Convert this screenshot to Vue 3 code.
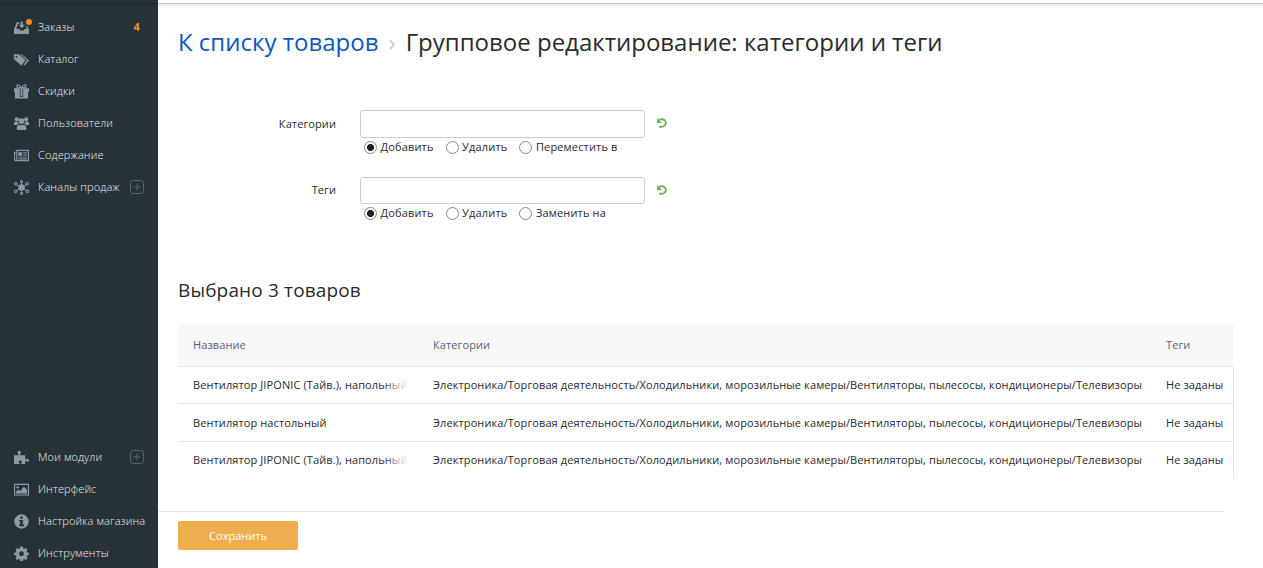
<script setup>
import { ref } from 'vue'

const mainNav = [
  { label: 'Заказы', icon: 'orders', count: 4 },
  { label: 'Каталог', icon: 'tags' },
  { label: 'Скидки', icon: 'gift' },
  { label: 'Пользователи', icon: 'users' },
  { label: 'Содержание', icon: 'news' },
  { label: 'Каналы продаж', icon: 'hub', plus: true },
]
const toolNav = [
  { label: 'Мои модули', icon: 'puzzle', plus: true },
  { label: 'Интерфейс', icon: 'image' },
  { label: 'Настройка магазина', icon: 'info' },
  { label: 'Инструменты', icon: 'gear' },
]
const navGroups = [mainNav, toolNav]

const fields = ref([
  { label: 'Категории', value: '', mode: 'Добавить', modes: ['Добавить', 'Удалить', 'Переместить в'] },
  { label: 'Теги', value: '', mode: 'Добавить', modes: ['Добавить', 'Удалить', 'Заменить на'] },
])

const path = 'Электроника/Торговая деятельность/Холодильники, морозильные камеры/Вентиляторы, пылесосы, кондиционеры/Телевизоры'
const products = [
  { name: 'Вентилятор JIPONIC (Тайв.), напольный', long: true },
  { name: 'Вентилятор настольный', long: false },
  { name: 'Вентилятор JIPONIC (Тайв.), напольный', long: true },
]
</script>

<template>
  <div class="page">
    <aside class="sidebar">
      <nav v-for="(group, g) in navGroups" :key="g" class="group">
        <a v-for="item in group" :key="item.label" class="item">
          <svg class="icon" viewBox="0 0 16 16" fill="currentColor">
            <g v-if="item.icon === 'orders'">
              <path d="M2.800 2.500H6V4H4.300L2.200 9.200h3.200l1 2h4l1-2H14L12.600 6H14l2 4v5H0v-5z" />
              <path d="M7.200 1.500h2.200v3.500h2.300L8.400 8.800 5 5h2.200z" />
            </g>
            <g v-else-if="item.icon === 'tags'">
              <path fill-rule="evenodd" d="M0 2.500h5.400l7 6.200-4.700 5.600L0 7.600zM2.500 4a1.100 1.100 0 1 0 0 2.200 1.100 1.100 0 0 0 0-2.200z" />
              <path d="M7 2.500h1.500L16 9l-4.600 5.400-1.200-1L14 9z" />
            </g>
            <g v-else-if="item.icon === 'gift'">
              <path d="M0 4.500h6.200v4H0zM9.800 4.500H16v4H9.800zM1 8.500h5.200v7H1zM9.800 8.500H15v7H9.800zM6 13.800h4v1.700H6zM7 5h2v8H7z" />
              <path d="M7.700 4.300C6.500.4 3.300.3 3.100 2.300c-.1 1.400 2 2 4.600 2zm.6 0C9.500.4 12.700.3 12.900 2.300c.1 1.400-2 2-4.600 2z" fill="none" stroke="currentColor" stroke-width="1.300" />
            </g>
            <g v-else-if="item.icon === 'users'">
              <circle cx="3" cy="3.400" r="2.200" /><circle cx="13" cy="3.400" r="2.200" /><circle cx="8" cy="5.400" r="3.100" />
              <path d="M0 9.700V7.500q0-1.700 1.700-1.700h2.200q.2 1.800 1.400 2.800-1.400.2-2.300 1.100zM16 9.700V7.500q0-1.700-1.700-1.700h-2.200q-.2 1.800-1.400 2.800 1.400.2 2.300 1.100zM2.800 13.200q0-4 3-4 2.200 1.200 4.400 0 3 0 3 4 0 1.800-1.800 1.800H4.600q-1.800 0-1.800-1.800z" />
            </g>
            <g v-else-if="item.icon === 'news'">
              <path d="M3 2.500h12.400v11H2q-1.400 0-1.400-1.400V4.500H3zM3 4v8q0 1.500-1.200 1.500" fill="none" stroke="currentColor" stroke-width="1.200" />
              <path d="M4.700 4.500h4v3.700h-4zM9.800 4.500H14v1H9.800zM9.800 7H14v1H9.800zM4.700 9.200H14v1H4.700zM4.700 11.200H14v1H4.700z" />
            </g>
            <g v-else-if="item.icon === 'hub'">
              <circle cx="8" cy="8" r="3.500" />
              <path d="M8 8V2M8 8l6-3.500M8 8l6 3.800M8 8v6M8 8l-6 3.800M8 8L2 4.500" stroke="currentColor" />
              <g fill="#263238" stroke="currentColor" stroke-width="1.100">
                <circle cx="8" cy="1.700" r="1.100" /><circle cx="14" cy="4" r="1.400" /><circle cx="14.100" cy="12" r="1.400" /><circle cx="8" cy="14.300" r="1.100" /><circle cx="1.900" cy="12" r="1.400" /><circle cx="2" cy="4" r="1.400" />
              </g>
            </g>
            <path v-else-if="item.icon === 'puzzle'" d="M0 5.500h4.600V4.200Q3.800 3.500 3.800 2.500 3.800.800 5.600.800t1.800 1.700q0 1-.8 1.700v1.300H12v4.700h1q.5-1 1.500-1 1.500 0 1.500 1.700t-1.500 1.700q-1 0-1.500-1h-1V15H7.800v-1.300q.7-.5.7-1.200 0-1.300-1.700-1.300T5 12.500q0 .700.700 1.200V15H0z" />
            <g v-else-if="item.icon === 'image'">
              <path d="M.6 2.500h14.800v11.300H.6z" fill="none" stroke="currentColor" stroke-width="1.200" />
              <circle cx="4" cy="5.500" r="1.300" />
              <path d="M2.200 12.300V10l2.500-2 2 1.500L10.500 5l3.300 3.300v4z" />
            </g>
            <path v-else-if="item.icon === 'info'" fill-rule="evenodd" d="M8 .3a7.700 7.700 0 1 0 0 15.400A7.700 7.700 0 0 0 8 .3zM6.700 2.600h2.600v2.500H6.700zM5.500 6.300h3.900v5h1.200V13H5.500v-1.700h1.200V8H5.500z" />
            <path v-else fill-rule="evenodd" d="M6.700.5h2.600l.4 2 1.300.6L12.700 2l1.800 1.800-1.100 1.700.5 1.300 2 .4v2.500l-2 .4-.5 1.300 1.100 1.700-1.800 1.800-1.700-1.100-1.300.5-.4 2H6.700l-.4-2-1.300-.5-1.700 1.100-1.800-1.800 1.100-1.700-.5-1.300-2-.4V7.200l2-.4.5-1.300-1.100-1.700L3.300 2 5 3.100l1.300-.6zM8 5.700a2.600 2.600 0 1 0 0 5.200 2.600 2.600 0 0 0 0-5.200z" />
          </svg>
          <i v-if="item.count" class="dot"></i>
          <span>{{ item.label }}</span>
          <b v-if="item.count" class="count">{{ item.count }}</b>
          <svg v-if="item.plus" class="plus" viewBox="0 0 14 14" fill="none" stroke="currentColor">
            <rect x=".5" y=".5" width="13" height="13" rx="3" /><path d="M7 3.500v7M3.500 7h7" />
          </svg>
        </a>
      </nav>
    </aside>

    <main class="content">
      <h1 class="title">
        <a class="back">К списку товаров</a><span class="sep">›</span><span>Групповое редактирование: категории и теги</span>
      </h1>

      <form class="form">
        <div v-for="f in fields" :key="f.label" class="field">
          <label class="label">{{ f.label }}</label>
          <div class="control">
            <div class="line">
              <input v-model="f.value" class="input" type="text" />
              <svg class="undo" viewBox="0 0 10 10">
                <path d="M2 2.300Q3.300 1.200 5 1.200a3.800 3.800 0 0 1 0 7.600H2.200" fill="none" stroke="currentColor" stroke-width="1.900" />
                <path d="M0 0v5h5z" fill="currentColor" />
              </svg>
            </div>
            <div class="modes">
              <label v-for="m in f.modes" :key="m" class="mode">
                <i class="radio" :class="{ on: m === f.mode }"></i><span>{{ m }}</span>
              </label>
            </div>
          </div>
        </div>
      </form>

      <h2 class="subtitle">Выбрано 3 товаров</h2>

      <section class="table">
        <div class="row head"><span>Название</span><span>Категории</span><span>Теги</span></div>
        <div v-for="(p, i) in products" :key="i" class="row">
          <span class="name" :class="{ fade: p.long }">{{ p.name }}</span><span class="path">{{ path }}</span><span>Не заданы</span>
        </div>
      </section>

      <footer class="footer"><button class="save" type="button">Сохранить</button></footer>
    </main>
  </div>
</template>

<style>
html, body { margin: 0; overflow: hidden; background: #fff; }
</style>

<style scoped>
.page {
  position: relative;
  display: flex;
  width: 1263px;
  height: 568px;
  overflow: hidden;
  font: 11px/16px "Open Sans", "Noto Sans", sans-serif;
  color: #2b2b2b;
}
.page::before {
  content: "";
  position: absolute;
  inset: 0 0 auto;
  height: 9px;
  background: linear-gradient(transparent 3px, rgba(0, 0, 0, .22) 3px, rgba(0, 0, 0, .22) 4px, rgba(0, 0, 0, .08) 4px, transparent 9px);
}
.sidebar {
  flex: none;
  width: 158px;
  height: 557px;
  padding-top: 11px;
  background: #263238;
  color: #ecf3f7;
  font-weight: 300;
  letter-spacing: .12px;
}
.group + .group { margin-top: 238px; }
.item {
  position: relative;
  display: flex;
  align-items: center;
  height: 32px;
  padding: 0 14px;
  white-space: nowrap;
}
.icon { flex: none; width: 15px; height: 15px; margin-right: 9px; color: #8f9ba4; }
.dot { position: absolute; left: 26px; top: 8px; width: 6px; height: 6px; border-radius: 50%; background: #fb8c1b; }
.count { margin-left: auto; margin-right: 4px; font-weight: 700; color: #f9922b; }
.plus { width: 14px; height: 14px; margin-left: auto; color: #59666c; }
.content { flex: 1; min-width: 0; }
.title {
  display: flex;
  margin: 25px 0 0 20px;
  font-size: 24px;
  line-height: 34px;
  font-weight: 400;
  white-space: nowrap;
}
.back { color: #0b57c2; }
.sep { margin: 0 10px; color: #c5c9cc; }
.form { padding: 51px 0 0; }
.field { display: flex; height: 66px; }
.label { width: 178px; margin-right: 24px; padding-top: 6px; text-align: right; letter-spacing: .1px; }
.line { display: flex; align-items: center; }
.input {
  box-sizing: border-box;
  width: 285px;
  height: 28px;
  border: 1px solid #ccc;
  border-radius: 3px;
  background: #fff;
  outline: none;
}
.field + .field .line { padding-top: 1px; }
.field + .field .input { height: 27px; }
.undo { width: 10px; height: 10px; margin: -2px 0 0 12px; color: #6bb35a; }
.field + .field .undo { margin-top: -1px; }
.modes { display: flex; gap: 12px; padding: 1px 0 0 4px; }
.mode { display: flex; align-items: center; gap: 3.5px; white-space: nowrap; letter-spacing: .16px; }
.radio { box-sizing: border-box; width: 13px; height: 13px; border: 1px solid #888; border-radius: 50%; }
.radio.on { background: radial-gradient(circle, #222 3.200px, #fff 3.800px); }
.subtitle { margin: 34px 0 0 20px; font-size: 19px; line-height: 28px; font-weight: 400; letter-spacing: .15px; white-space: nowrap; }
.table { width: 1056px; margin: 20px 0 0 20px; }
.row {
  box-sizing: border-box;
  display: grid;
  grid-template-columns: 240px 733px 1fr;
  align-items: center;
  height: 38px;
  padding-left: 15px;
  border-right: 1px solid #e6e6e6;
  border-bottom: 1px solid #e6e6e6;
  letter-spacing: .1px;
  white-space: nowrap;
}
.row:nth-child(2) { height: 37px; }
.row:last-child { height: 37px; padding-bottom: 1px; border-bottom: 0; }
.head { height: 43px; background: #f8f8f8; border-right-color: #f8f8f8; color: #56617a; }
.path { letter-spacing: .107px; }
.name { position: relative; width: 215px; overflow: hidden; }
.fade::after { content: ""; position: absolute; inset: 0 0 0 auto; width: 24px; background: linear-gradient(to right, rgba(255, 255, 255, 0), #fff); }
.footer { width: 1045px; margin-top: 32px; padding: 9px 0 0 20px; border-top: 1px solid #e2e2e2; }
.save {
  display: block;
  width: 120px;
  height: 29px;
  padding: 0;
  border: 0;
  border-radius: 2px;
  background: #f0ad4e;
  color: #fff;
  font: inherit;
}
</style>
